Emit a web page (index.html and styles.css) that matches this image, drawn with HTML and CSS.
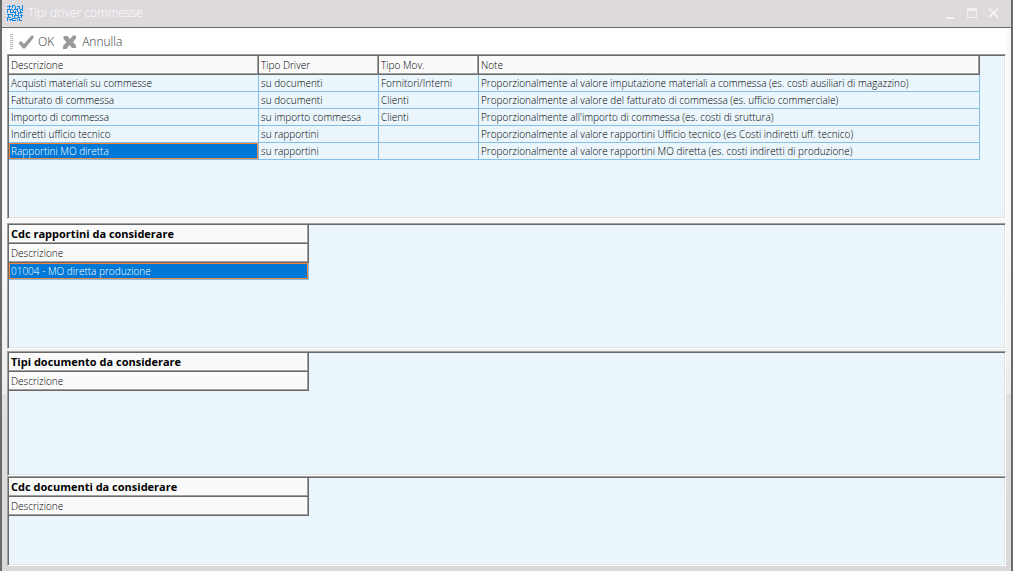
FILE: index.html
```
<!DOCTYPE html>
<html lang="it">
<head>
<meta charset="utf-8">
<title>Tipi driver commesse</title>
<link rel="stylesheet" href="styles.css">
</head>
<body>
<div class="window">
  <header class="titlebar">
    <svg class="app-icon" viewBox="0 0 16 16" aria-hidden="true"><path d="M0 1.500H4M2.500 0V4M5 0.500H8M5.500 0V3M8.500 1V4M10 1.500H13M12.500 1V4M15.500 0V6M0 4.500H6M7 4.500H11M10.500 3V7M13 4.500H16M0.500 4V8M3.500 5V8M6.500 5V7M3 7.500H9M8.500 6V10M11 7.500H16M13.500 5V9M0 9.500H6M1.500 9V12M5.500 9V12M7 10.500H12M11.500 8V12M14.500 9V13M13 10.500H16M0 12.500H4M7.500 10V14M5 13.500H10M12.500 12V16M10 12.500H13M0.500 12V16M2 14.500H6M3.500 14V16M5 15.500H9M10.500 14V16M12 15.500H15"/></svg>
    <h1 class="window-title">Tipi driver commesse</h1>
    <div class="window-controls">
      <button class="control" type="button" aria-label="Riduci a icona"><svg viewBox="0 0 12 12"><path d="M2 11H10" stroke-width="2"/></svg></button>
      <button class="control" type="button" aria-label="Ingrandisci"><svg viewBox="0 0 12 12"><path d="M1.500 2V10.500H10.500V2" stroke-width="1"/><path d="M1 2.500H11" stroke-width="3"/></svg></button>
      <button class="control" type="button" aria-label="Chiudi"><svg viewBox="0 0 12 12"><path d="M1 1.500L10 10.500M10 1.500L1 10.500" stroke-width="2"/></svg></button>
    </div>
  </header>
  <div class="toolbar" role="toolbar">
    <span class="grip"></span>
    <button class="tool" type="button"><svg class="tool-icon" viewBox="0 0 16 16" aria-hidden="true"><path d="M0.500 9L3 7L6 10L13.500 1.500H15.500V4L7 14.500H5Z"/></svg>OK</button>
    <button class="tool" type="button"><svg class="tool-icon" viewBox="0 0 16 16" aria-hidden="true"><path d="M1.500 2H5.500L8 5L11 1.500H14V4.500L11 8L14 11.500V14H10L7.500 11L4.500 15H1V12L4.500 8L1.500 5Z"/></svg>Annulla</button>
  </div>
  <main class="panels">
    <section class="panel panel-main">
      <table class="grid grid-main">
        <colgroup><col class="col-name"><col class="col-driver"><col class="col-mov"><col class="col-note"></colgroup>
        <thead><tr><th>Descrizione</th><th>Tipo Driver</th><th>Tipo Mov.</th><th>Note</th></tr></thead>
        <tbody>
          <tr><td>Acquisti materiali su commesse</td><td>su documenti</td><td>Fornitori/Interni</td><td>Proporzionalmente al valore imputazione materiali a commessa (es. costi ausiliari di magazzino)</td></tr>
          <tr><td>Fatturato di commessa</td><td>su documenti</td><td>Clienti</td><td>Proporzionalmente al valore del fatturato di commessa (es. ufficio commerciale)</td></tr>
          <tr><td>Importo di commessa</td><td>su importo commessa</td><td>Clienti</td><td>Proporzionalmente all'importo di commessa (es. costi di sruttura)</td></tr>
          <tr><td>Indiretti ufficio tecnico</td><td>su rapportini</td><td></td><td>Proporzionalmente al valore rapportini Ufficio tecnico (es Costi indiretti uff. tecnico)</td></tr>
          <tr><td class="selected">Rapportini MO diretta</td><td>su rapportini</td><td></td><td>Proporzionalmente al valore rapportini MO diretta (es. costi indiretti di produzione)</td></tr>
        </tbody>
      </table>
    </section>
    <section class="panel panel-reports">
      <table class="grid grid-side">
        <thead><tr><th class="group">Cdc rapportini da considerare</th></tr><tr><th>Descrizione</th></tr></thead>
        <tbody><tr><td class="selected">01004 - MO diretta produzione</td></tr></tbody>
      </table>
    </section>
    <section class="panel panel-types">
      <table class="grid grid-side">
        <thead><tr><th class="group">Tipi documento da considerare</th></tr><tr><th>Descrizione</th></tr></thead>
      </table>
    </section>
    <section class="panel panel-docs">
      <table class="grid grid-side">
        <thead><tr><th class="group">Cdc documenti da considerare</th></tr><tr><th>Descrizione</th></tr></thead>
      </table>
    </section>
  </main>
</div>
</body>
</html>
```
FILE: styles.css
```
* { box-sizing: border-box; }
body {
  margin: 0;
  font-family: "Open Sans", "Noto Sans", sans-serif;
  font-size: 10px;
  font-weight: 300;
  color: #000;
}
.window {
  display: flex;
  flex-direction: column;
  min-height: 100vh;
  border: solid #6b6a6b;
  border-width: 0 2px;
  background: linear-gradient(#fafafa 0, #f8f8f8 40%, #eceeee 69%, #e2e0e1 69%, #d9d9d9 100%);
}
.titlebar {
  display: flex;
  align-items: center;
  height: 28px;
  padding: 0 11px 2px 5px;
  border-bottom: 1px solid #6b6a6b;
  background: #ddd9dd;
}
.app-icon {
  width: 16px;
  height: 16px;
  fill: none;
  stroke: #0f8cf0;
  stroke-width: 1;
  shape-rendering: crispEdges;
}
.window-title {
  margin: 0 0 0 5px;
  font-size: 12px;
  font-weight: 300;
  color: #fff;
}
.window-controls { display: flex; gap: 10px; margin-left: auto; }
.control {
  width: 12px;
  height: 12px;
  padding: 0;
  border: 0;
  background: none;
}
.control svg { display: block; fill: none; stroke: #f1f0f1; }
.toolbar {
  display: flex;
  align-items: center;
  height: 25px;
  margin: 1px 5px 0;
  padding: 0 3px;
  border-radius: 2px;
  background: #fff;
}
.grip {
  width: 3px;
  height: 16px;
  margin-right: 5px;
  background: repeating-linear-gradient(#b4b4b4 0 1px, #fff 1px 2px);
}
.tool {
  display: flex;
  align-items: center;
  gap: 4px;
  margin-right: 8px;
  padding: 0;
  border: 0;
  background: none;
  font: inherit;
  font-size: 12px;
  color: #333;
}
.tool-icon { width: 16px; height: 16px; fill: #9a9a9a; }
.panels {
  display: flex;
  flex: 1;
  flex-direction: column;
  padding: 0 5px 5px;
}
.panel {
  border: 1px solid;
  border-color: #a0a0a0 #fff #fff #a0a0a0;
  background: #eaf5fc;
  box-shadow: inset 1px 1px #696969, inset -1px -1px #e3e3e3;
  padding: 1px;
}
.panel-main { flex: 161 0 0; margin-bottom: 4px; }
.panel-reports { flex: 122 0 0; margin-bottom: 2px; }
.panel-types { flex: 121 0 0; }
.panel-docs { flex: 86 0 0; }
.grid { border-collapse: separate; border-spacing: 0; table-layout: fixed; }
.grid-main { width: 971px; max-width: 100%; }
.grid-side { width: 300px; max-width: 100%; }
.col-name { width: 250px; }
.col-driver { width: 120px; }
.col-mov { width: 100px; }
th, td {
  padding: 0 2px;
  overflow: hidden;
  white-space: nowrap;
  text-align: left;
  font-weight: 300;
}
th {
  height: 19px;
  border: solid #696969;
  border-width: 0 1px 1px 0;
  background: #fafafa;
  box-shadow: inset -1px -1px #a0a0a0;
  line-height: 18px;
}
.group { font-size: 11px; font-weight: 700; }
td {
  height: 17px;
  border: solid #84bfe8;
  border-width: 0 1px 1px 0;
  line-height: 16px;
}
.selected {
  background: #0078d7;
  box-shadow: inset 0 0 0 1px #f58535;
  color: #fff;
}
```
